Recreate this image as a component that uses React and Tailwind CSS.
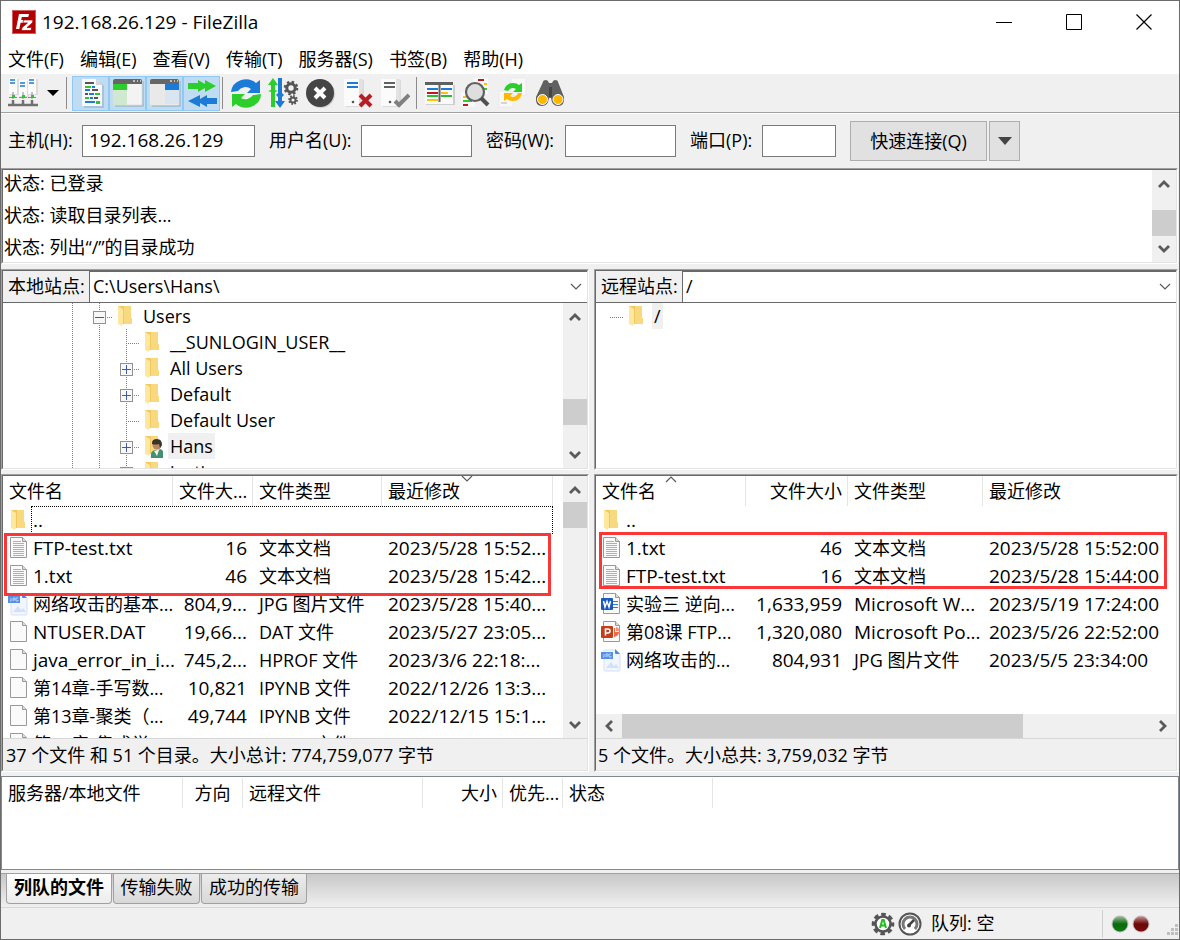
import React from 'react';
import clsx from 'clsx';

const menus = ['文件(F)', '编辑(E)', '查看(V)', '传输(T)', '服务器(S)', '书签(B)', '帮助(H)'];

const logLines = ['已登录', '读取目录列表...', '列出“/”的目录成功'];

const tree = [
  { name: 'Users', depth: 1, box: 'minus' },
  { name: '__SUNLOGIN_USER__', depth: 2 },
  { name: 'All Users', depth: 2, box: 'plus' },
  { name: 'Default', depth: 2, box: 'plus' },
  { name: 'Default User', depth: 2 },
  { name: 'Hans', depth: 2, box: 'plus', user: true, selected: true },
  { name: 'justin', depth: 2, box: 'plus' },
];

const localFiles = [
  ['folder', '..', '', '', ''],
  ['text', 'FTP-test.txt', '16', '文本文档', '2023/5/28 15:52...'],
  ['text', '1.txt', '46', '文本文档', '2023/5/28 15:42...'],
  ['jpg', '网络攻击的基本...', '804,9...', 'JPG 图片文件', '2023/5/28 15:40...'],
  ['blank', 'NTUSER.DAT', '19,66...', 'DAT 文件', '2023/5/27 23:05...'],
  ['blank', 'java_error_in_i...', '745,2...', 'HPROF 文件', '2023/3/6 22:18:...'],
  ['blank', '第14章-手写数...', '10,821', 'IPYNB 文件', '2022/12/26 13:3...'],
  ['blank', '第13章-聚类（...', '49,744', 'IPYNB 文件', '2022/12/15 15:1...'],
  ['blank', '第12章-集成学...', '36,984', 'IPYNB 文件', '2022/12/14 9:40...'],
];

const remoteFiles = [
  ['folder', '..', '', '', ''],
  ['text', '1.txt', '46', '文本文档', '2023/5/28 15:52:00'],
  ['text', 'FTP-test.txt', '16', '文本文档', '2023/5/28 15:44:00'],
  ['word', '实验三 逆向...', '1,633,959', 'Microsoft W...', '2023/5/19 17:24:00'],
  ['ppt', '第08课 FTP...', '1,320,080', 'Microsoft Po...', '2023/5/26 22:52:00'],
  ['jpg', '网络攻击的...', '804,931', 'JPG 图片文件', '2023/5/5 23:34:00'],
];

// Latin-only strings are set one pixel larger so they balance the CJK text
const sizeOf = (text) => (/[^\x00-\x7f]/.test(text) ? 'text-[18px]' : 'text-[19px]');

function Logo() {
  return (
    <svg width="24" height="24" viewBox="0 0 24 24">
      <rect width="24" height="24" fill="#b30000" />
      <rect x=".5" y=".5" width="23" height="23" fill="none" stroke="#fff" strokeDasharray="1 1" opacity=".75" />
      <path d="M4 19 7 4h10l-.7 3H9.800l-.6 3h5l-.6 2.700h-5L7.300 19Z" fill="#fff" />
      <path d="M11.500 10H21l-.6 2.800-5.400 4.700h4.500L19 20.500H9.500l.6-3 5.400-4.600H11Z" fill="#fff" stroke="#b30000" strokeWidth=".7" />
    </svg>
  );
}

function Svg({ children }) {
  return <svg width="32" height="32" viewBox="0 0 32 32">{children}</svg>;
}

function SitesIcon() {
  return (
    <Svg>
      {[2, 12, 21].map((x, i) => (
        <g key={x}>
          <rect x={x + 1} y={i === 1 ? 4 : 2} width="9" height="16" fill="#dcdcdc" />
          <rect x={x} y={i === 1 ? 3 : 1} width="8" height="16" fill="#fbfbfb" />
          <path d={i === 1 ? `M${x + 1} 6h5m-5 3h5` : `M${x + 1} 3h5m-5 3h5`} stroke="#1c7bd6" strokeWidth="1.5" />
          <path d={`M${x + 4} 15v7`} stroke="#8a8a8a" strokeWidth="1" />
          <path d={`M${x} 20.500h8`} stroke="#8a8a8a" strokeWidth="1" />
          <rect x={x + 3} y="18" width="3" height="3" fill="#2fc52f" />
        </g>
      ))}
      <path d="M1 28h30M6 23v5m10-5v5m9-5v5" stroke="#707070" strokeWidth="2.500" />
    </Svg>
  );
}

function LogIcon() {
  return (
    <Svg>
      <path d="M9 5h16l4 4v22H9Z" fill="#a9c3d6" />
      <path d="M7 2h14l6 6v21H7Z" fill="#f8f8f8" />
      <path d="M21 2v6h6Z" fill="#d6d6d6" />
      <g strokeWidth="2" fill="none">
        <path d="M10 6h9M17 13h6M10 17h3M19 21h4" stroke="#555" />
        <path d="M10 10h6M20 17h5M10 21h4" stroke="#2fc52f" />
        <path d="M17 10h3M10 13h5M14 17h5M15 21h3M10 25h10" stroke="#1c7bd6" />
      </g>
      <path d="M21 24h4v3h-4Z" fill="#2fc52f" />
    </Svg>
  );
}

function PaneIcon({ right }) {
  return (
    <Svg>
      <rect x="3" y="4" width="29" height="26" rx="1" fill="#a9c3d6" />
      <rect x="1" y="3" width="29" height="25" rx="1" fill="#f3f3f3" stroke="#dcdcdc" strokeWidth=".6" />
      <path d="M1 7V4q0-2 2-2h25q2 0 2 2v3Z" fill="#666" />
      <path d="M21 4h2m2 0h1m2 0h1" stroke="#ddd" strokeWidth="1.3" />
      {right ? (
        <>
          <path d="M2 7h14v20H2Z" fill="#e9e9e9" />
          <path d="M16 7h14v6H16Z" fill="#1c7bd6" />
          <path d="M16 13h14v14H16Z" fill="#d9e6f2" />
        </>
      ) : (
        <>
          <path d="M1 7h14v6H1Z" fill="#2bce2b" />
          <path d="M1 13h14v15H1Z" fill="#cfe8cf" />
        </>
      )}
    </Svg>
  );
}

function QueueIcon() {
  return (
    <Svg>
      <path d="M2 6h10V3l7 4V3l11 6-11 6v-4l-7 4v-3H2Z" fill="#2bce2b" />
      <path d="M31 21H21v-3l-7 4v-4L2 24l12 6v-4l7 4v-3h10Z" fill="#1c7bd6" />
    </Svg>
  );
}

function RefreshIcon() {
  return (
    <Svg>
      <path d="M1 15A15 14 0 0 1 26 6l4-3v13H17l4-4A9 9 0 0 0 8 14Z" fill="#1c7bd6" />
      <path d="M31 17A15 14 0 0 1 6 27l-4 3V17h13l-4 4a9 9 0 0 0 12-3Z" fill="#2bce2b" />
    </Svg>
  );
}

function ProcessIcon() {
  return (
    <Svg>
      <path d="M6 1 11 8H8v5l3 1-3 1v15H4V15l-3-1 3-1V8H1Z" fill="#2bce2b" />
      <path d="M11 1h4v15l2 2-2 2v4h3l-5 7-5-7h3v-4l-2-2 2-2Z" fill="#1c7bd6" />
      <circle cx="24" cy="11" r="4.200" fill="none" stroke="#555" strokeWidth="3" />
      <circle cx="24" cy="11" r="6" fill="none" stroke="#555" strokeWidth="2.600" strokeDasharray="2.400 2.300" />
      <circle cx="26" cy="23" r="2.600" fill="none" stroke="#555" strokeWidth="2" />
      <circle cx="26" cy="23" r="4" fill="none" stroke="#555" strokeWidth="1.800" strokeDasharray="1.600 1.500" />
    </Svg>
  );
}

function CancelIcon() {
  return (
    <Svg>
      <circle cx="17" cy="17" r="14" fill="#cfcfcf" />
      <circle cx="16" cy="16" r="14" fill="#454545" />
      <path d="m11 11 10 10m0-10L11 21" stroke="#fff" strokeWidth="4" />
    </Svg>
  );
}

function ServerIcon({ ok }) {
  return (
    <Svg>
      <path d="M5 3h18v27H5Z" fill="#dadada" />
      <path d="M3 2h15v27H3Z" fill="#fbfbfb" />
      <path d="M18 2h4l-1 27h-3Z" fill="#e2e2e2" />
      <path d="M6 6h11M6 10h11" stroke={ok ? '#606060' : '#1c7bd6'} strokeWidth="2" />
      <circle cx="12" cy="25" r="1.3" fill="#555" />
      {ok ? (
        <path d="m17 24 4 4L31 18" fill="none" stroke="#808080" strokeWidth="4" />
      ) : (
        <path d="m19 18 11 11m0-11L19 29" stroke="#b91c22" strokeWidth="4" />
      )}
    </Svg>
  );
}

function FilterIcon() {
  return (
    <Svg>
      <path d="M3 8h29v20H3Z" fill="#cfcfcf" />
      <path d="M2 7h28v20H2Z" fill="#fafafa" />
      <path d="M2 5h28v3H2Z" fill="#606060" />
      <g strokeWidth="2">
        <path d="M4 12h11m3 0h11" stroke="#1c7bd6" />
        <path d="M4 16h11" stroke="#c01820" />
        <path d="M18 16h7M4 23h11" stroke="#ffc107" />
        <path d="M4 19h11m3 0h11" stroke="#2bbf2b" />
      </g>
      <path d="M16.500 6v19" stroke="#606060" strokeWidth="2" />
    </Svg>
  );
}

function SearchIcon() {
  return (
    <Svg>
      <path d="M14 1h14v16H14ZM1 15h14v15H1Z" fill="#f8f8f8" />
      <path d="M18 3h6M3 28h5" stroke="#c01820" strokeWidth="2" />
      <path d="M24 7h3M3 20h5" stroke="#ffc107" strokeWidth="2" />
      <path d="M23 12h4M3 24h9" stroke="#2bce2b" strokeWidth="2" />
      <circle cx="15" cy="15" r="9" fill="#dedede" stroke="#606060" strokeWidth="2.200" />
      <path d="m21 21 7 7" stroke="#505050" strokeWidth="4" />
    </Svg>
  );
}

function SyncIcon() {
  return (
    <Svg>
      <path d="M14 1h15v17H14ZM2 14h14v16H2Z" fill="#f8f8f8" stroke="#e2e2e2" strokeWidth=".5" />
      <path d="M4 26h6" stroke="#d5d5d5" strokeWidth="2" />
      <path d="M7 13q2-7 9-7 4 0 6 2l3-2v9h-9l3-3q-5-3-8 2Z" fill="#2bce2b" />
      <path d="M25 16q-2 8-9 8-4 0-6-2l-3 2v-8h9l-3 3q5 3 8-3Z" fill="#ffb700" />
    </Svg>
  );
}

function FindIcon() {
  return (
    <Svg>
      <path d="M9 5q0-2 3-2 2 0 3 3h3q1-3 3-3 3 0 3 2l6 15q1 9-6 9-6 0-7-8h-2q-1 8-7 8-7 0-6-9Z" fill="#606060" />
      <path d="M15 10h3v10h-3Z" fill="#454545" />
      <circle cx="8.500" cy="22.500" r="5" fill="#ffb700" stroke="#fff" strokeWidth="1" />
      <circle cx="24" cy="22.500" r="5" fill="#ffb700" stroke="#fff" strokeWidth="1" />
    </Svg>
  );
}

function FolderIcon({ user }) {
  return (
    <svg width="22" height="24" viewBox="0 0 22 24" className="shrink-0">
      <path d="M8 2h9v12h1v6H8Z" fill="#f8d97f" />
      <path d="M4 2h6v18H6Z" fill="#f3c95f" />
      <path d="m4 2 5 3v14l-1 3-4-2Z" fill="#ffe79e" />
      {user && (
        <>
          <path d="M10 24q-1-7 4-8l3 1 2-2q4 1 4 7v2Z" fill="#42906f" />
          <path d="m13 17 3 5 2-6Z" fill="#eef6f8" />
          <circle cx="16" cy="11" r="4.500" fill="#b88a62" />
          <path d="M11 9q0-4 5-4t5 6l-2 3-1-4q-4 1-7 0Z" fill="#3a332c" />
        </>
      )}
    </svg>
  );
}

function FileIcon({ kind }) {
  if (kind === 'folder') return <FolderIcon />;
  return (
    <svg width="22" height="24" viewBox="0 0 22 24" className="shrink-0">
      {kind === 'jpg' ? (
        <>
          <path d="M4 2h12l4 4v16q0 1-1 1H5q-1 0-1-1Z" fill="#f1f6fe" stroke="#d3e1f8" />
          <path d="M15 1v4q0 1 1 1h4Z" fill="#4b86e0" />
          <path d="m6 20 5-6 3 4 2-2 3 4Z" fill="#d3e1f8" />
          <rect x="1" y="4" width="12" height="7" fill="#5790e6" />
          <path d="M4 6v3H3m3 0V6h2v2H6m5-2H9v3h2V8" fill="none" stroke="#c8dcfa" strokeWidth=".8" />
        </>
      ) : (
        <>
          <path d="M3.500 1.500h12l4 4v16h-16Z" fill="#fafafa" stroke="#999" />
          <path d="M15.500 1.500v4h4" fill="#ddd" stroke="#999" />
        </>
      )}
      {kind === 'text' && (
        <path d="M6 5.500h8m-8 2h11m-11 2h11m-11 2h11m-11 2h11m-11 2h11m-11 2h11m-11 2h11" stroke="#b0b0b0" />
      )}
      {kind === 'word' && (
        <>
          <path d="M13 9.500h5m-5 3h5m-5 3h5" stroke="#2f80d0" />
          <rect x="1" y="6" width="12" height="12" rx="1" fill="#185abd" />
          <path d="m3.500 9 1.500 6 2-5.500L9 15l1.500-6" fill="none" stroke="#fff" strokeWidth="1.500" />
        </>
      )}
      {kind === 'ppt' && (
        <>
          <path d="M14 8h1v4h4q0 4-5 5Z" fill="#ed6c47" />
          <path d="M16 7q3 0 3 4h-3Z" fill="#ff8f6b" />
          <rect x="1" y="6" width="12" height="12" rx="1" fill="#c43e1c" />
          <path d="M5.500 15.500V9H8q2 0 2 2t-2 2H5.500" fill="none" stroke="#fff" strokeWidth="1.600" />
        </>
      )}
    </svg>
  );
}

function Chevron({ dir = 'down', thin }) {
  const paths = {
    up: 'm2 10 5-5 5 5',
    down: 'm2 4 5 5 5-5',
    left: 'M10 2 5 7l5 5',
    right: 'm4 2 5 5-5 5',
  };
  return (
    <svg width="14" height="14" viewBox="0 0 14 14">
      <path d={paths[dir]} fill="none" stroke="#5a5a5a" strokeWidth={thin ? 1.2 : 2.8} />
    </svg>
  );
}

function ScrollBar({ before, after }) {
  return (
    <div className="flex w-6 shrink-0 flex-col bg-[#f0f0f0]">
      <button aria-label="向上滚动" className="flex h-[26px] shrink-0 items-center justify-center pt-[2px]">
        <Chevron dir="up" />
      </button>
      <div className={before} />
      <div className="h-[26px] shrink-0 bg-[#cdcdcd]" />
      <div className={after} />
      <button aria-label="向下滚动" className="flex h-[26px] shrink-0 items-center justify-center">
        <Chevron />
      </button>
    </div>
  );
}

function Sunken({ className, children }) {
  return (
    <div className={clsx('border border-t-[#a0a0a0] border-r-white border-b-white border-l-[#a0a0a0]', className)}>
      <div className="flex h-full flex-col border border-t-[#696969] border-r-[#e3e3e3] border-b-[#e3e3e3] border-l-[#696969] bg-white">
        {children}
      </div>
    </div>
  );
}

function AddressBar({ id, label, value }) {
  return (
    <div className="flex h-8 shrink-0 border-b border-[#696969] text-[18px]">
      <label htmlFor={id} className="flex w-[87px] shrink-0 items-center border-r border-[#696969] bg-[#f0f0f0] pl-[5px] whitespace-nowrap">
        {label}
      </label>
      <div className="relative flex-1 border-t border-[#696969]">
        <select id={id} className="block h-full w-full appearance-none bg-white pb-[2px] pl-[3px] text-[18px] outline-none">
          <option>{value}</option>
        </select>
        <div className="pointer-events-none absolute inset-y-0 right-1 flex items-center">
          <Chevron thin />
        </div>
      </div>
    </div>
  );
}

function Branch({ box, vertical = true }) {
  return (
    <svg width="27" height="26" viewBox="0 0 27 26" className="shrink-0" shapeRendering="crispEdges">
      {vertical && <path d="M13.500 0v26" stroke="#808080" strokeDasharray="1 1" />}
      <path d="M13 14.500h15" stroke="#808080" strokeDasharray="1 1" />
      {box && <rect x="7.500" y="8.500" width="12" height="12" fill="#f7f7f7" stroke="#919191" />}
      {box && <path d="M9 14.500h9" stroke="#3f5ba9" />}
      {box === 'plus' && <path d="M13.500 10v9" stroke="#3f5ba9" />}
    </svg>
  );
}

function Guide() {
  return (
    <svg width="27" height="26" viewBox="0 0 27 26" className="shrink-0" shapeRendering="crispEdges">
      <path d="M13.500 0v26" stroke="#808080" strokeDasharray="1 1" />
    </svg>
  );
}

function TreeItem({ name, box, user, selected, depth, vertical }) {
  return (
    <li className="flex h-[26px] items-center">
      {Array.from({ length: depth }, (_, i) => (
        <Guide key={i} />
      ))}
      <Branch box={box} vertical={vertical} />
      <span className="flex w-7 shrink-0 justify-start pl-px">
        <FolderIcon user={user} />
      </span>
      <span className={clsx('h-[26px] px-[2px] text-[18px] leading-[26px]', selected && 'bg-[#f0f0f0]')}>{name}</span>
    </li>
  );
}

function FileTable({ files, widths, sort, label, tableClass, focused }) {
  const heads = ['文件名', widths[1] === 'w-20' ? '文件大...' : '文件大小', '文件类型', '最近修改'];
  return (
    <table aria-label={label} className={clsx('table-fixed border-separate border-spacing-0 whitespace-nowrap', tableClass)}>
      <colgroup>
        {widths.map((w, i) => (
          <col key={i} className={w} />
        ))}
      </colgroup>
      <thead>
        <tr className="h-[30px] text-[18px]">
          {heads.map((h, i) => (
            <th
              key={h}
              className={clsx(
                'relative border-[#e5e5e5] py-0 pl-[6px] leading-[28px] font-normal',
                i === 1 ? 'pr-[5px] text-right' : 'text-left',
                (i < 3 || focused) && 'border-r'
              )}
            >
              {h}
              {sort.col === i && (
                <span className="absolute inset-x-0 -top-1 flex justify-center">
                  <Chevron dir={sort.dir} thin />
                </span>
              )}
            </th>
          ))}
        </tr>
      </thead>
      <tbody>
        {files.map(([kind, name, size, type, date]) => (
          <tr key={name} className="h-7 leading-[26px]">
            <td className={clsx('p-0 pl-1', sizeOf(name))}>
              <span className="flex h-7 items-center gap-1">
                <FileIcon kind={kind} />
                {name}
              </span>
            </td>
            <td className="p-0 pr-[6px] text-right text-[19px]">{size}</td>
            <td className={clsx('p-0 pl-[6px]', sizeOf(type))}>{type}</td>
            <td className="p-0 pl-[6px] text-[19px]">{date}</td>
          </tr>
        ))}
      </tbody>
    </table>
  );
}

function ToolButton({ label, pressed, children }) {
  return (
    <button
      aria-label={label}
      className={clsx(
        'flex h-[35px] w-[37px] items-center justify-center border',
        pressed ? 'border-[#90c8f6] bg-[#c0dcf3]' : 'border-transparent'
      )}
    >
      {children}
    </button>
  );
}

function Divider() {
  return <div className="h-8 w-px bg-[#8c8c8c]" />;
}

function Field({ id, label, labelClass, inputClass, value }) {
  return (
    <div className="flex items-center">
      <label htmlFor={id} className={clsx('pb-[2px] whitespace-nowrap', labelClass)}>
        {label}
      </label>
      <input
        id={id}
        defaultValue={value}
        className={clsx('h-8 border border-[#7a7a7a] bg-white px-[6px] pb-[3px] text-[19px] outline-none', inputClass)}
      />
    </div>
  );
}

function Led({ green }) {
  const id = green ? 'led-green' : 'led-red';
  return (
    <svg width="18" height="18" viewBox="0 0 18 18">
      <defs>
        <linearGradient id={id} x1="0" y1="0" x2="0" y2="1">
          <stop offset="0" stopColor={green ? '#8fbf8f' : '#c98a8a'} />
          <stop offset=".5" stopColor={green ? '#0c6a10' : '#6a0808'} />
          <stop offset="1" stopColor={green ? '#0b7a10' : '#7d0b0b'} />
        </linearGradient>
      </defs>
      <circle cx="9" cy="9" r="8.500" fill="#bdbdbd" />
      <circle cx="9" cy="9" r="7.500" fill={`url(#${id})`} />
    </svg>
  );
}

export default function App() {
  return (
    <div className="flex min-h-screen flex-col border border-[#6b6b6b] bg-[#f0f0f0] font-['Open_Sans','Noto_Sans_CJK_SC',sans-serif] text-black">
      {/* title bar */}
      <header className="flex h-[42px] items-center bg-white pl-[11px]">
        <Logo />
        <h1 className="flex-1 pl-[6px] text-[19px] leading-6">192.168.26.129 - FileZilla</h1>
        <div className="flex">
          <button aria-label="最小化" className="flex h-10 w-[70px] items-center justify-center">
            <svg width="16" height="16"><path d="M0 8.500h16" stroke="#000" /></svg>
          </button>
          <button aria-label="最大化" className="flex h-10 w-[70px] items-center justify-center">
            <svg width="16" height="16"><path d="M.500.500h15v15H.500Z" fill="none" stroke="#000" /></svg>
          </button>
          <button aria-label="关闭" className="flex h-10 w-[70px] items-center justify-center">
            <svg width="16" height="16"><path d="m.500.500 15 15m0-15-15 15" stroke="#000" strokeWidth="1.200" /></svg>
          </button>
        </div>
      </header>

      <nav className="flex h-[31px] items-center gap-4 bg-white px-[7px] text-[18px] leading-6">
        {menus.map((m) => (
          <button key={m} className="whitespace-nowrap">{m}</button>
        ))}
      </nav>

      {/* toolbar */}
      <div className="flex h-[39px] items-center border-b border-[#a0a0a0] pl-[5px]">
        <button aria-label="站点管理器" className="flex w-[34px] justify-center"><SitesIcon /></button>
        <button aria-label="站点列表" className="flex w-[26px] justify-center">
          <svg width="12" height="6"><path d="M0 0h12L6 6Z" /></svg>
        </button>
        <Divider />
        <div className="flex pr-[2px] pl-[5px]">
          <ToolButton label="消息日志" pressed><LogIcon /></ToolButton>
          <ToolButton label="本地目录树" pressed><PaneIcon /></ToolButton>
          <ToolButton label="远程目录树" pressed><PaneIcon right /></ToolButton>
          <ToolButton label="传输队列" pressed><QueueIcon /></ToolButton>
        </div>
        <Divider />
        <div className="flex px-1">
          <ToolButton label="刷新"><RefreshIcon /></ToolButton>
          <ToolButton label="处理队列"><ProcessIcon /></ToolButton>
          <ToolButton label="取消"><CancelIcon /></ToolButton>
          <ToolButton label="断开连接"><ServerIcon /></ToolButton>
          <ToolButton label="重新连接"><ServerIcon ok /></ToolButton>
        </div>
        <Divider />
        <div className="flex px-[3px]">
          <ToolButton label="目录比较"><FilterIcon /></ToolButton>
          <ToolButton label="过滤"><SearchIcon /></ToolButton>
          <ToolButton label="同步浏览"><SyncIcon /></ToolButton>
          <ToolButton label="搜索"><FindIcon /></ToolButton>
        </div>
      </div>

      {/* quick connect */}
      <form className="flex h-[55px] items-center gap-[14px] border-t border-white pl-[7px] text-[18px]" onSubmit={(e) => e.preventDefault()}>
        <Field id="host" label="主机(H):" labelClass="w-[74px]" inputClass="w-[173px]" value="192.168.26.129" />
        <Field id="user" label="用户名(U):" labelClass="w-[92px]" inputClass="w-[111px]" />
        <Field id="pass" label="密码(W):" labelClass="w-[79px]" inputClass="w-[111px]" />
        <Field id="port" label="端口(P):" labelClass="w-[72px]" inputClass="w-[74px]" />
        <div className="flex gap-[2px]">
          <button className="h-10 w-[137px] border border-[#adadad] bg-[#e1e1e1]">快速连接(Q)</button>
          <button aria-label="历史连接" className="flex h-10 w-[31px] items-center justify-center border border-[#adadad] bg-[#e1e1e1]">
            <svg width="14" height="8"><path d="M0 0h14L7 8Z" fill="#444" /></svg>
          </button>
        </div>
      </form>

      <Sunken className="mr-px h-24">
        <div className="flex h-full">
          <ul className="flex-1 pl-px text-[18px]">
            {logLines.map((line) => (
              <li key={line} className="h-8 leading-[26px]">状态: {line}</li>
            ))}
          </ul>
          <ScrollBar before="flex-1" after="hidden" />
        </div>
      </Sunken>

      <div className="mt-[5px] mr-px grid grid-cols-[588fr_584fr] gap-[5px]">
        <Sunken className="h-[201px]">
          <AddressBar id="local-path" label="本地站点:" value="C:\Users\Hans\" />
          <div className="flex min-h-0 flex-1">
            <ul className="flex-1 overflow-hidden pl-14">
              {tree.map((t) => (
                <TreeItem key={t.name} {...t} />
              ))}
            </ul>
            <ScrollBar before="grow-4" after="grow" />
          </div>
        </Sunken>
        <Sunken className="h-[201px]">
          <AddressBar id="remote-path" label="远程站点:" value="/" />
          <ul className="pl-px">
            <TreeItem name="/" depth={0} vertical={false} selected />
          </ul>
        </Sunken>
      </div>

      <div className="mt-1 mr-px grid grid-cols-[588fr_584fr] gap-[5px]">
        <Sunken className="h-[298px]">
          <div className="flex min-h-0 flex-1">
            <div className="relative min-w-0 flex-1 overflow-hidden">
              <FileTable
                label="本地文件"
                files={localFiles}
                widths={['w-[170px]', 'w-20', 'w-[129px]', 'w-[171px]']}
                tableClass="w-[550px]"
                sort={{ col: 3, dir: 'down' }}
                focused
              />
              <div className="absolute top-[30px] left-7 h-7 w-[522px] border border-dotted border-black" />
              <div className="absolute top-[57px] left-px h-[63px] w-[547px] border-3 border-[#fa3636]" />
            </div>
            <ScrollBar before="hidden" after="flex-1" />
          </div>
          <p className="h-8 shrink-0 border-t border-[#d7d7d7] bg-[#f0f0f0] pl-[3px] text-[18px] leading-8">
            37 个文件 和 51 个目录。大小总计: 774,759,077 字节
          </p>
        </Sunken>
        <Sunken className="h-[298px]">
          <div className="relative min-h-0 flex-1 overflow-hidden">
            <FileTable
              label="远程文件"
              files={remoteFiles}
              widths={['w-[150px]', 'w-[102px]', 'w-[135px]', 'w-auto']}
              tableClass="w-full"
              sort={{ col: 0, dir: 'up' }}
            />
            <div className="absolute top-14 right-[9px] left-[3px] h-[57px] border-3 border-[#fa3636]" />
          </div>
          <div className="flex h-6 shrink-0 bg-[#f0f0f0]">
            <button aria-label="向左滚动" className="flex w-[26px] items-center justify-center"><Chevron dir="left" /></button>
            <div className="flex-1"><div className="h-full w-[76%] bg-[#cdcdcd]" /></div>
            <button aria-label="向右滚动" className="flex w-[26px] items-center justify-center"><Chevron dir="right" /></button>
          </div>
          <p className="h-8 shrink-0 border-t border-[#d7d7d7] bg-[#f0f0f0] pl-[2px] text-[18px] leading-8">
            5 个文件。大小总共: 3,759,032 字节
          </p>
        </Sunken>
      </div>

      {/* transfer queue */}
      <div className="mt-1 min-h-[94px] flex-1 border border-[#828790] bg-white">
        <table aria-label="传输队列" className="mt-px w-[711px] table-fixed border-separate border-spacing-0 text-[18px] whitespace-nowrap">
          <thead>
            <tr className="h-[30px] leading-[28px]">
              <th className="w-[181px] border-r border-[#e5e5e5] py-0 pl-[6px] text-left font-normal">服务器/本地文件</th>
              <th className="w-[60px] border-r border-[#e5e5e5] py-0 text-center font-normal">方向</th>
              <th className="w-[180px] border-r border-[#e5e5e5] py-0 pl-[6px] text-left font-normal">远程文件</th>
              <th className="w-20 border-r border-[#e5e5e5] py-0 pr-[5px] text-right font-normal">大小</th>
              <th className="w-[60px] border-r border-[#e5e5e5] py-0 pl-[6px] text-left font-normal">优先...</th>
              <th className="border-r border-[#e5e5e5] py-0 pl-[6px] text-left font-normal">状态</th>
            </tr>
          </thead>
        </table>
      </div>

      <div role="tablist" className="mt-[3px] flex h-[34px] items-start gap-px border-t border-[#a0a0a0] bg-linear-to-b from-[#c8c8c8] to-[#f0f0f0] pl-[5px] text-[18px] leading-6">
        <button role="tab" aria-selected="true" className="h-[30px] w-[106px] rounded-b-sm border border-t-0 border-[#a0a0a0] bg-linear-to-b from-white to-[#ececec] pb-1 font-bold">
          列队的文件
        </button>
        <button role="tab" aria-selected="false" className="h-[30px] w-[87px] rounded-b-sm border border-t-0 border-[#a0a0a0] bg-linear-to-b from-[#ececec] to-[#d8d8d8] pb-1">
          传输失败
        </button>
        <button role="tab" aria-selected="false" className="h-[30px] w-[106px] rounded-b-sm border border-t-0 border-[#a0a0a0] bg-linear-to-b from-[#ececec] to-[#d8d8d8] pb-1">
          成功的传输
        </button>
      </div>

      {/* status bar */}
      <footer className="flex h-8 items-center justify-end border-t border-[#d7d7d7] text-[18px]">
        <svg width="24" height="24" viewBox="0 0 24 24">
          <circle cx="12" cy="12" r="9.500" fill="none" stroke="#555" strokeWidth="3.600" strokeDasharray="4.460 3" strokeDashoffset="2" />
          <circle cx="12" cy="12" r="7.500" fill="#fff" stroke="#555" strokeWidth="2.500" />
          <path d="M9 16 11.300 8h1.400L15 16m-5-2.500h4" fill="none" stroke="#22bb22" strokeWidth="2" />
        </svg>
        <svg width="24" height="24" viewBox="0 0 24 24" className="ml-[3px]">
          <circle cx="12" cy="12" r="10.500" fill="#fff" stroke="#555" strokeWidth="2" />
          <path d="M7 17a7 7 0 1 1 10 0" fill="none" stroke="#777" strokeWidth="3" />
          <path d="m11 13 5-5" stroke="#444" strokeWidth="2.500" />
          <circle cx="11" cy="13.500" r="2" fill="#444" />
        </svg>
        <span className="w-[180px] pl-[9px]">队列: 空</span>
        <div className="flex h-7 items-center gap-[3px] border-l border-[#d0d0d0] pr-[13px] pl-2">
          <Led green />
          <Led />
        </div>
        <svg width="16" height="28" viewBox="0 0 16 28">
          <path d="M12 14h3v3h-3Zm0 4h3v3h-3Zm-4 0h3v3H8Zm4 4h3v3h-3Zm-4 0h3v3H8Zm-4 0h3v3H4Z" fill="#bfbfbf" />
        </svg>
      </footer>
    </div>
  );
}
